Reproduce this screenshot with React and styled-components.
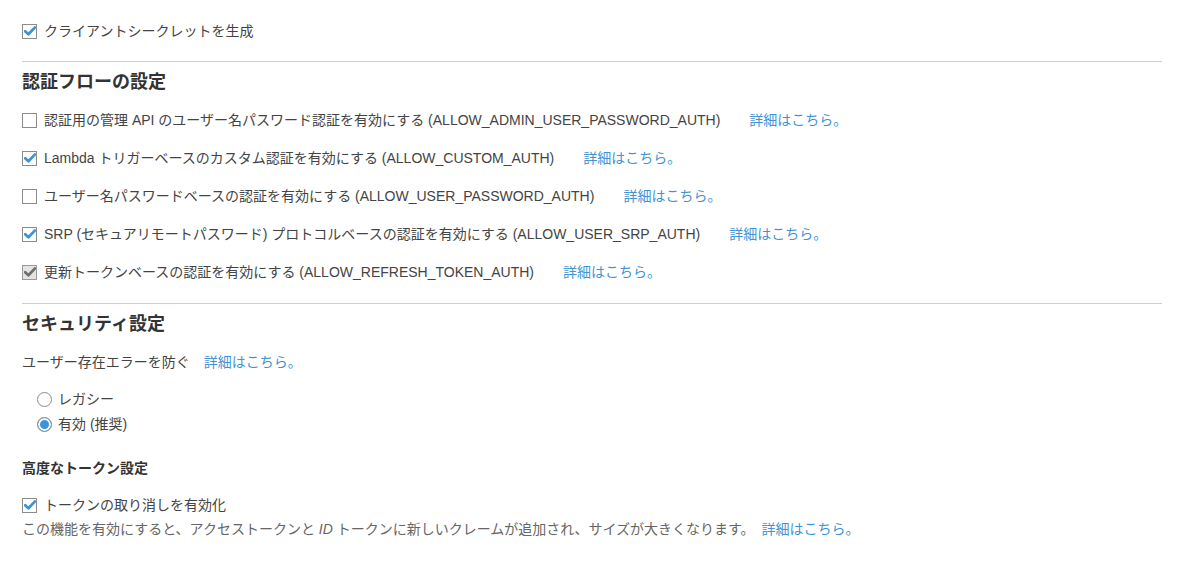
import React from "react";
import styled, { createGlobalStyle } from "styled-components";

const GlobalStyle = createGlobalStyle`
  body {
    margin: 0;
    background: #fff;
    font-family: "Liberation Sans", "Noto Sans CJK JP", sans-serif;
    font-size: 14px;
    color: #444;
  }
`;

const flows = [
  { label: "認証用の管理 API のユーザー名パスワード認証を有効にする (ALLOW_ADMIN_USER_PASSWORD_AUTH)", checked: false },
  { label: "Lambda トリガーベースのカスタム認証を有効にする (ALLOW_CUSTOM_AUTH)", checked: true },
  { label: "ユーザー名パスワードベースの認証を有効にする (ALLOW_USER_PASSWORD_AUTH)", checked: false },
  { label: "SRP (セキュアリモートパスワード) プロトコルベースの認証を有効にする (ALLOW_USER_SRP_AUTH)", checked: true },
  { label: "更新トークンベースの認証を有効にする (ALLOW_REFRESH_TOKEN_AUTH)", checked: true, disabled: true },
];

function Checkbox({ checked, disabled }) {
  return (
    <Box $disabled={disabled}>
      {checked && (
        <svg width="12" height="10" viewBox="0 0 12 10">
          <path
            d="M1.2 5.2 L4.4 8.2 L10.8 1.6"
            fill="none"
            stroke={disabled ? "#6e6e6e" : "#3b94d9"}
            strokeWidth="2.8"
            strokeLinecap="round"
            strokeLinejoin="round"
          />
        </svg>
      )}
    </Box>
  );
}

function App() {
  return (
    <>
      <GlobalStyle />
      <Page>
        <CheckRow>
          <Checkbox checked />
          <Label>クライアントシークレットを生成</Label>
        </CheckRow>

        <Divider />
        <Heading>認証フローの設定</Heading>
        <FlowList>
          {flows.map((f) => (
            <CheckRow key={f.label}>
              <Checkbox checked={f.checked} disabled={f.disabled} />
              <Label>{f.label}</Label>
              <Link $gap={29}>詳細はこちら。</Link>
            </CheckRow>
          ))}
        </FlowList>

        <Divider $top={21} />
        <Heading>セキュリティ設定</Heading>
        <Line>
          ユーザー存在エラーを防ぐ
          <Link $gap={14}>詳細はこちら。</Link>
        </Line>
        <RadioGroup>
          <RadioRow>
            <Radio />
            <Label $gap={6}>レガシー</Label>
          </RadioRow>
          <RadioRow>
            <Radio $checked />
            <Label $gap={6}>有効 (推奨)</Label>
          </RadioRow>
        </RadioGroup>

        <SubHeading>高度なトークン設定</SubHeading>
        <CheckRow $top={17}>
          <Checkbox checked />
          <Label>トークンの取り消しを有効化</Label>
        </CheckRow>
        <Help>
          この機能を有効にすると、アクセストークンと <i>ID</i> トークンに新しいクレームが追加され、サイズが大きくなります。
          <Link $gap={7}>詳細はこちら。</Link>
        </Help>
      </Page>
    </>
  );
}

export default App;

const Page = styled.div`
  width: 1140px;
  padding: 21px 0 0 22px;
`;

const CheckRow = styled.div`
  display: flex;
  align-items: center;
  height: 20px;
  line-height: 20px;
  white-space: nowrap;
  margin-top: ${(p) => p.$top || 0}px;
`;

const Label = styled.span`
  margin-left: ${(p) => p.$gap || 7}px;
`;

const Box = styled.span`
  box-sizing: border-box;
  width: 15px;
  height: 15px;
  flex: none;
  border: 1px solid ${(p) => (p.$disabled ? "#9a9a9a" : "#8c8c8c")};
  background: ${(p) => (p.$disabled ? "#e3e3e3" : "#fff")};
  display: flex;
  align-items: center;
  justify-content: center;
`;

const Divider = styled.hr`
  border: 0;
  border-top: 1px solid #cfcfcf;
  margin: ${(p) => p.$top || 20}px 0 0;
`;

const Heading = styled.h2`
  margin: 8px 0 0;
  font-size: 18px;
  line-height: 24px;
  font-weight: bold;
  color: #333;
`;

const FlowList = styled.div`
  display: flex;
  flex-direction: column;
  gap: 18px;
  margin-top: 16px;
`;

const Link = styled.a`
  color: #3f94d6;
  margin-left: ${(p) => p.$gap}px;
  cursor: pointer;
`;

const Line = styled.div`
  margin-top: 16px;
  line-height: 20px;
`;

const RadioGroup = styled.div`
  display: flex;
  flex-direction: column;
  gap: 5px;
  margin: 17px 0 0 15px;
`;

const RadioRow = styled.label`
  display: flex;
  align-items: center;
  height: 20px;
  line-height: 20px;
`;

const Radio = styled.span`
  box-sizing: border-box;
  width: 15px;
  height: 15px;
  flex: none;
  border-radius: 50%;
  border: 1px solid #8c8c8c;
  background: ${(p) => (p.$checked ? "#3b94d9" : "#fff")};
  box-shadow: ${(p) => (p.$checked ? "inset 0 0 0 2px #fff" : "none")};
`;

const SubHeading = styled.h3`
  margin: 24px 0 0;
  font-size: 14px;
  line-height: 20px;
  font-weight: bold;
  color: #333;
`;

const Help = styled.p`
  margin: 4px 0 0;
  line-height: 20px;
  color: #666;
  & i {
    font-style: italic;
  }
`;
